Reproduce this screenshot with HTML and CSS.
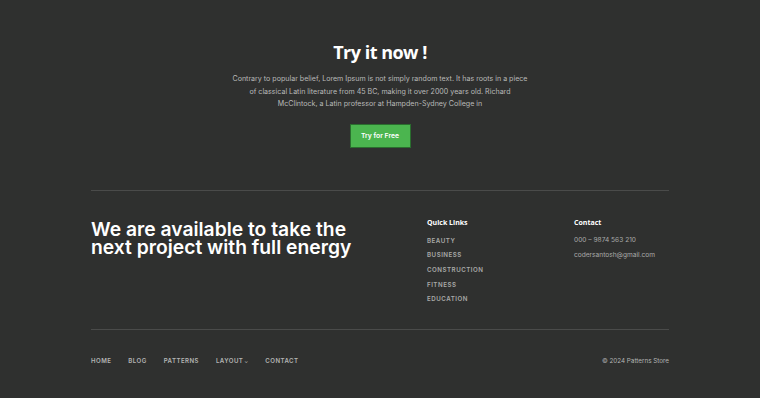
FILE: index.html
```html
<!DOCTYPE html>
<html>
<head>
<meta charset="utf-8">
<link rel="stylesheet" href="styles.css">
</head>
<body>
<div class="page">
  <section class="cta">
    <h1 class="cta-title">Try it now !</h1>
    <p class="cta-text">Contrary to popular belief, Lorem Ipsum is not simply random text. It has roots in a piece of classical Latin literature from 45 BC, making it over 2000 years old. Richard McClintock, a Latin professor at Hampden-Sydney College in</p>
    <a class="cta-btn">Try for Free</a>
  </section>
  <footer class="footer">
    <div class="footer-main">
      <h2 class="tagline">We are available to take the next project with full energy</h2>
      <div class="col col-links">
        <h3 class="col-title">Quick Links</h3>
        <ul class="links">
          <li>BEAUTY</li>
          <li>BUSINESS</li>
          <li>CONSTRUCTION</li>
          <li>FITNESS</li>
          <li>EDUCATION</li>
        </ul>
      </div>
      <div class="col col-contact">
        <h3 class="col-title">Contact</h3>
        <ul class="contact">
          <li>000 – 9874 563 210</li>
          <li>codersantosh@gmail.com</li>
        </ul>
      </div>
    </div>
    <div class="footer-bottom">
      <nav class="nav">
        <span>HOME</span>
        <span>BLOG</span>
        <span>PATTERNS</span>
        <span>LAYOUT<span class="caret">⌄</span></span>
        <span>CONTACT</span>
      </nav>
      <div class="copy">© 2024 Patterns Store</div>
    </div>
  </footer>
</div>
</body>
</html>
```
FILE: styles.css
```css
* { box-sizing: border-box; }
html, body { margin: 0; padding: 0; }
body {
  background: #2f302f;
  font-family: Inter, "Noto Sans", sans-serif;
  color: #fff;
  width: 760px;
  height: 398px;
  overflow: hidden;
}
.page {
  width: 578px;
  margin: 0 auto;
}
.cta {
  display: flex;
  flex-direction: column;
  align-items: center;
  padding-top: 40px;
  padding-bottom: 42px;
  border-bottom: 1px solid #4a4b4a;
}
.cta-title {
  margin: 0;
  font-family: "Open Sans", sans-serif;
  font-weight: 700;
  font-size: 18px;
  letter-spacing: -0.5px;
  line-height: 24px;
  color: #fff;
}
.cta-text {
  margin: 9px 0 0;
  width: 298px;
  font-size: 7.1px;
  line-height: 12.6px;
  text-align: center;
  color: #b9bab9;
}
.cta-btn {
  margin-top: 13px;
  display: block;
  width: 61px;
  height: 24px;
  line-height: 22px;
  text-align: center;
  background: #4bb54f;
  border: 1px solid #2a6e2e;
  font-size: 6.8px;
  font-weight: 600;
  color: #fff;
}
.footer-main {
  display: flex;
  padding-top: 27px;
  padding-bottom: 22px;
  border-bottom: 1px solid #4a4b4a;
}
.tagline {
  margin: 0;
  width: 336px;
  padding-right: 40px;
  font-size: 19.3px;
  line-height: 18.5px;
  font-weight: 600;
  padding-top: 2px;
  color: #fff;
}
.col-title {
  margin: 0;
  font-family: "Open Sans", sans-serif;
  font-weight: 700;
  font-size: 7px;
  line-height: 10px;
  color: #fff;
}
.col-links { width: 147px; }
.links, .contact {
  list-style: none;
  margin: 0;
  padding: 0;
}
.links { margin-top: 6px; }
.links li {
  font-size: 6.2px;
  line-height: 14.6px;
  letter-spacing: 0.5px;
  font-weight: 600;
  color: #a9aaa9;
}
.contact { margin-top: 5px; }
.contact li {
  font-size: 6.6px;
  line-height: 15px;
  color: #a9aaa9;
}
.footer-bottom {
  display: flex;
  justify-content: space-between;
  align-items: center;
  padding-top: 25px;
}
.nav {
  display: flex;
  gap: 17px;
}
.nav span {
  font-size: 6.1px;
  line-height: 12px;
  letter-spacing: 0.45px;
  font-weight: 600;
  color: #b4b5b4;
}
.nav .caret {
  font-size: 5px;
  letter-spacing: 0;
  margin-left: 1px;
}
.copy {
  font-size: 6.3px;
  line-height: 12px;
  color: #b4b5b4;
}
```
